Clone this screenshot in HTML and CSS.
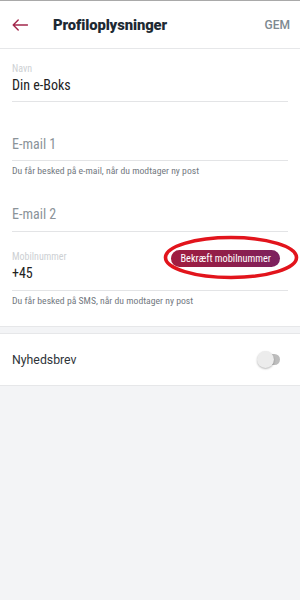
FILE: index.html
```html
<!DOCTYPE html>
<html lang="da">
<head>
<meta charset="utf-8">
<title>Profiloplysninger</title>
<link rel="stylesheet" href="styles.css">
</head>
<body>
<div class="screen">
  <header class="topbar">
    <svg class="back" width="16" height="12" viewBox="0 0 16 12" aria-hidden="true">
      <path d="M15.5 6H1.2M6.2 1L1.2 6l5 5" fill="none" stroke="#a3284c" stroke-width="1.4" stroke-linecap="round" stroke-linejoin="round"/>
    </svg>
    <h1 class="title">Profiloplysninger</h1>
    <span class="save">GEM</span>
  </header>

  <section class="form">
    <div class="field field-first">
      <div class="label-row"><span class="label">Navn</span></div>
      <div class="value">Din e-Boks</div>
    </div>

    <div class="field field-email1">
      <div class="label-row"></div>
      <div class="value placeholder">E-mail 1</div>
    </div>
    <div class="helper">Du får besked på e-mail, når du modtager ny post</div>

    <div class="field field-email2">
      <div class="label-row"></div>
      <div class="value placeholder">E-mail 2</div>
    </div>

    <div class="field field-mobile">
      <div class="label-row">
        <span class="label">Mobilnummer</span>
        <span class="confirm">Bekræft mobilnummer</span>
      </div>
      <div class="value">+45</div>
      <svg class="ring" width="136" height="45" viewBox="0 0 136 45" aria-hidden="true">
        <ellipse cx="68" cy="22.5" rx="65.5" ry="20" fill="none" stroke="#e2141c" stroke-width="3.6"/>
      </svg>
    </div>
    <div class="helper helper-last">Du får besked på SMS, når du modtager ny post</div>
  </section>

  <section class="toggle-row">
    <span class="toggle-label">Nyhedsbrev</span>
    <span class="switch"><span class="track"></span><span class="thumb"></span></span>
  </section>
</div>
</body>
</html>
```
FILE: styles.css
```css
* { box-sizing: border-box; }

html, body {
  margin: 0;
  padding: 0;
  background: #f3f4f6;
}

body {
  font-family: "Liberation Sans Narrow", "Roboto Condensed", Roboto, sans-serif;
  color: #1c1c1c;
}

.screen {
  width: 300px;
  height: 600px;
  background: #f3f4f6;
  overflow: hidden;
}

.topbar {
  height: 49px;
  background: #fff;
  border-top: 1px solid #a9a9a9;
  border-bottom: 1px solid #e6e7e9;
  display: flex;
  align-items: center;
  padding: 0 10px 0 12px;
}

.back { display: block; flex: none; }

.title {
  margin: 0 0 0 25px;
  font-family: Roboto, sans-serif;
  font-weight: 900;
  font-size: 14.8px;
  color: #1d2a33;
  flex: 1;
  letter-spacing: -0.1px;
}

.save {
  font-family: Roboto, sans-serif;
  font-weight: 500;
  font-size: 12px;
  color: #7d8990;
}

.form {
  background: #fff;
  padding: 0 12px 19px;
  border-bottom: 1px solid #e6e7e9;
}

.field {
  position: relative;
  border-bottom: 1px solid #e3e4e6;
  padding-bottom: 6px;
}

.field-first { padding-top: 12px; }
.field-email1 { padding-top: 18px; }
.field-email2 { padding-top: 13px; padding-bottom: 7px; }
.field-mobile { padding-top: 17px; padding-bottom: 7px; }

.label-row {
  height: 14px;
  display: flex;
  align-items: center;
  justify-content: space-between;
}

.label {
  font-size: 10px;
  color: #cdd0d3;
}

.value {
  height: 20px;
  line-height: 20px;
  font-size: 14px;
  color: #222;
}

.placeholder { color: #8b9399; }

.helper {
  margin-top: 4px;
  height: 12px;
  line-height: 12px;
  font-size: 9.7px;
  color: #73797f;
}

.confirm {
  margin: 4px 8px 0 0;
  height: 17px;
  line-height: 17px;
  padding: 0 9px;
  border-radius: 9px;
  font-size: 10.3px;
  color: #fff;
  background: linear-gradient(90deg, #a11d3f 0%, #8e1f4c 55%, #7c2160 100%);
  white-space: nowrap;
}

.ring {
  position: absolute;
  left: 151px;
  top: 3px;
}

.toggle-row {
  margin-top: 6px;
  height: 53px;
  background: #fff;
  border-top: 1px solid #e6e7e9;
  border-bottom: 1px solid #e6e7e9;
  display: flex;
  align-items: center;
  justify-content: space-between;
  padding: 0 20px 0 12px;
}

.toggle-label {
  font-family: Roboto, sans-serif;
  font-size: 12.3px;
  color: #2e3338;
}

.switch {
  position: relative;
  width: 23px;
  height: 17px;
}

.track {
  position: absolute;
  left: 5px;
  right: 0;
  top: 3px;
  height: 11px;
  border-radius: 6px;
  background: #bdbdbd;
}

.thumb {
  position: absolute;
  left: 0;
  top: 0;
  width: 17px;
  height: 17px;
  border-radius: 50%;
  background: #ececec;
  box-shadow: 0 1px 2px rgba(0,0,0,0.28);
}
```
